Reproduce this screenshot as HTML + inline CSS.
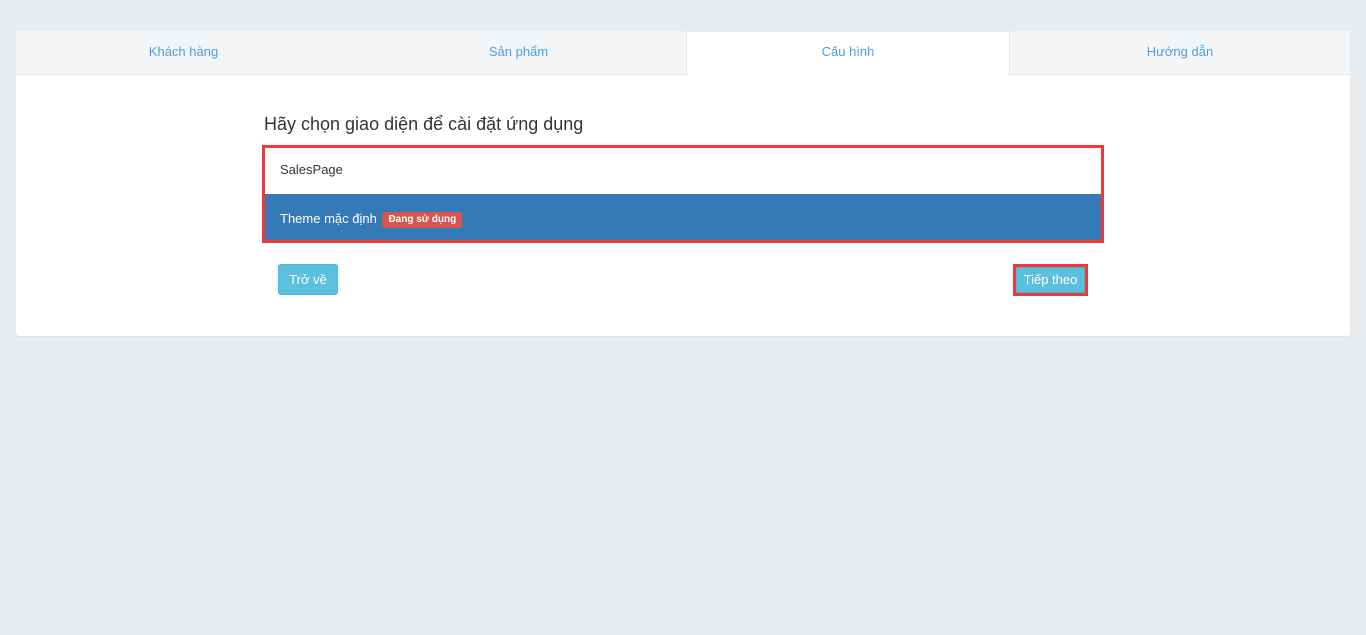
<!DOCTYPE html>
<html><head><meta charset="utf-8"><style>
*{box-sizing:border-box;margin:0;padding:0}
body{width:1366px;height:635px;background:#e9ecef;font-family:"Liberation Sans",Arial,sans-serif;position:relative;overflow:hidden}
.panel{position:absolute;left:16px;top:31px;width:1334px;height:305px;background:#fff;border-radius:3px;box-shadow:0 1px 1px #dde0e4}
.tabs{position:absolute;left:0;top:0;width:1334px;height:44px;background:#f4f5f7;border-bottom:1px solid #e3e6ea}
.tab{position:absolute;top:0;height:44px;line-height:41px;text-align:center;color:#4a9fe6;font-size:13px}
.tab.active{background:#fff;border:1px solid #e3e6ea;border-bottom:none;height:44px;line-height:39px}
h3{position:absolute;left:248px;top:83px;font-size:18px;font-weight:normal;color:#333}
.box{position:absolute;left:246px;top:114px;width:842px;height:98px;border:3px solid #f2373c}
.row1{height:46px;line-height:43px;padding-left:15px;font-size:13px;color:#333}
.row2{height:46px;line-height:49px;padding-left:15px;font-size:13px;color:#fff;background:#337ab7}
.badge{display:inline-block;background:#d9534f;color:#fff;font-size:10px;font-weight:bold;line-height:16px;height:16px;padding:0 6px;border-radius:3px;vertical-align:1px;margin-left:2px}
.btn{position:absolute;background:#5bc0de;color:#fff;font-size:13px;text-align:center;border-radius:3px;border:1px solid #46b8da}
.outl{position:absolute;left:997px;top:233px;width:75px;height:32px;border:3px solid #f2373c}
</style></head><body>
<div class="panel">
 <div class="tabs">
  <div class="tab" style="left:0;width:335px">Khách hàng</div>
  <div class="tab" style="left:335px;width:335px">Sản phẩm</div>
  <div class="tab active" style="left:670px;width:324px">Cấu hình</div>
  <div class="tab" style="left:994px;width:340px">Hướng dẫn</div>
 </div>
 <h3>Hãy chọn giao diện để cài đặt ứng dụng</h3>
 <div class="box">
  <div class="row1">SalesPage</div>
  <div class="row2">Theme mặc định <span class="badge">Đang sử dụng</span></div>
 </div>
 <div class="btn" style="left:262px;top:233px;width:60px;height:31px;line-height:29px">Trở về</div>
 <div class="btn" style="left:1000px;top:236px;width:69px;height:26px;line-height:24px;border-radius:0">Tiếp theo</div>
 <div class="outl"></div>
</div>
</body></html>
